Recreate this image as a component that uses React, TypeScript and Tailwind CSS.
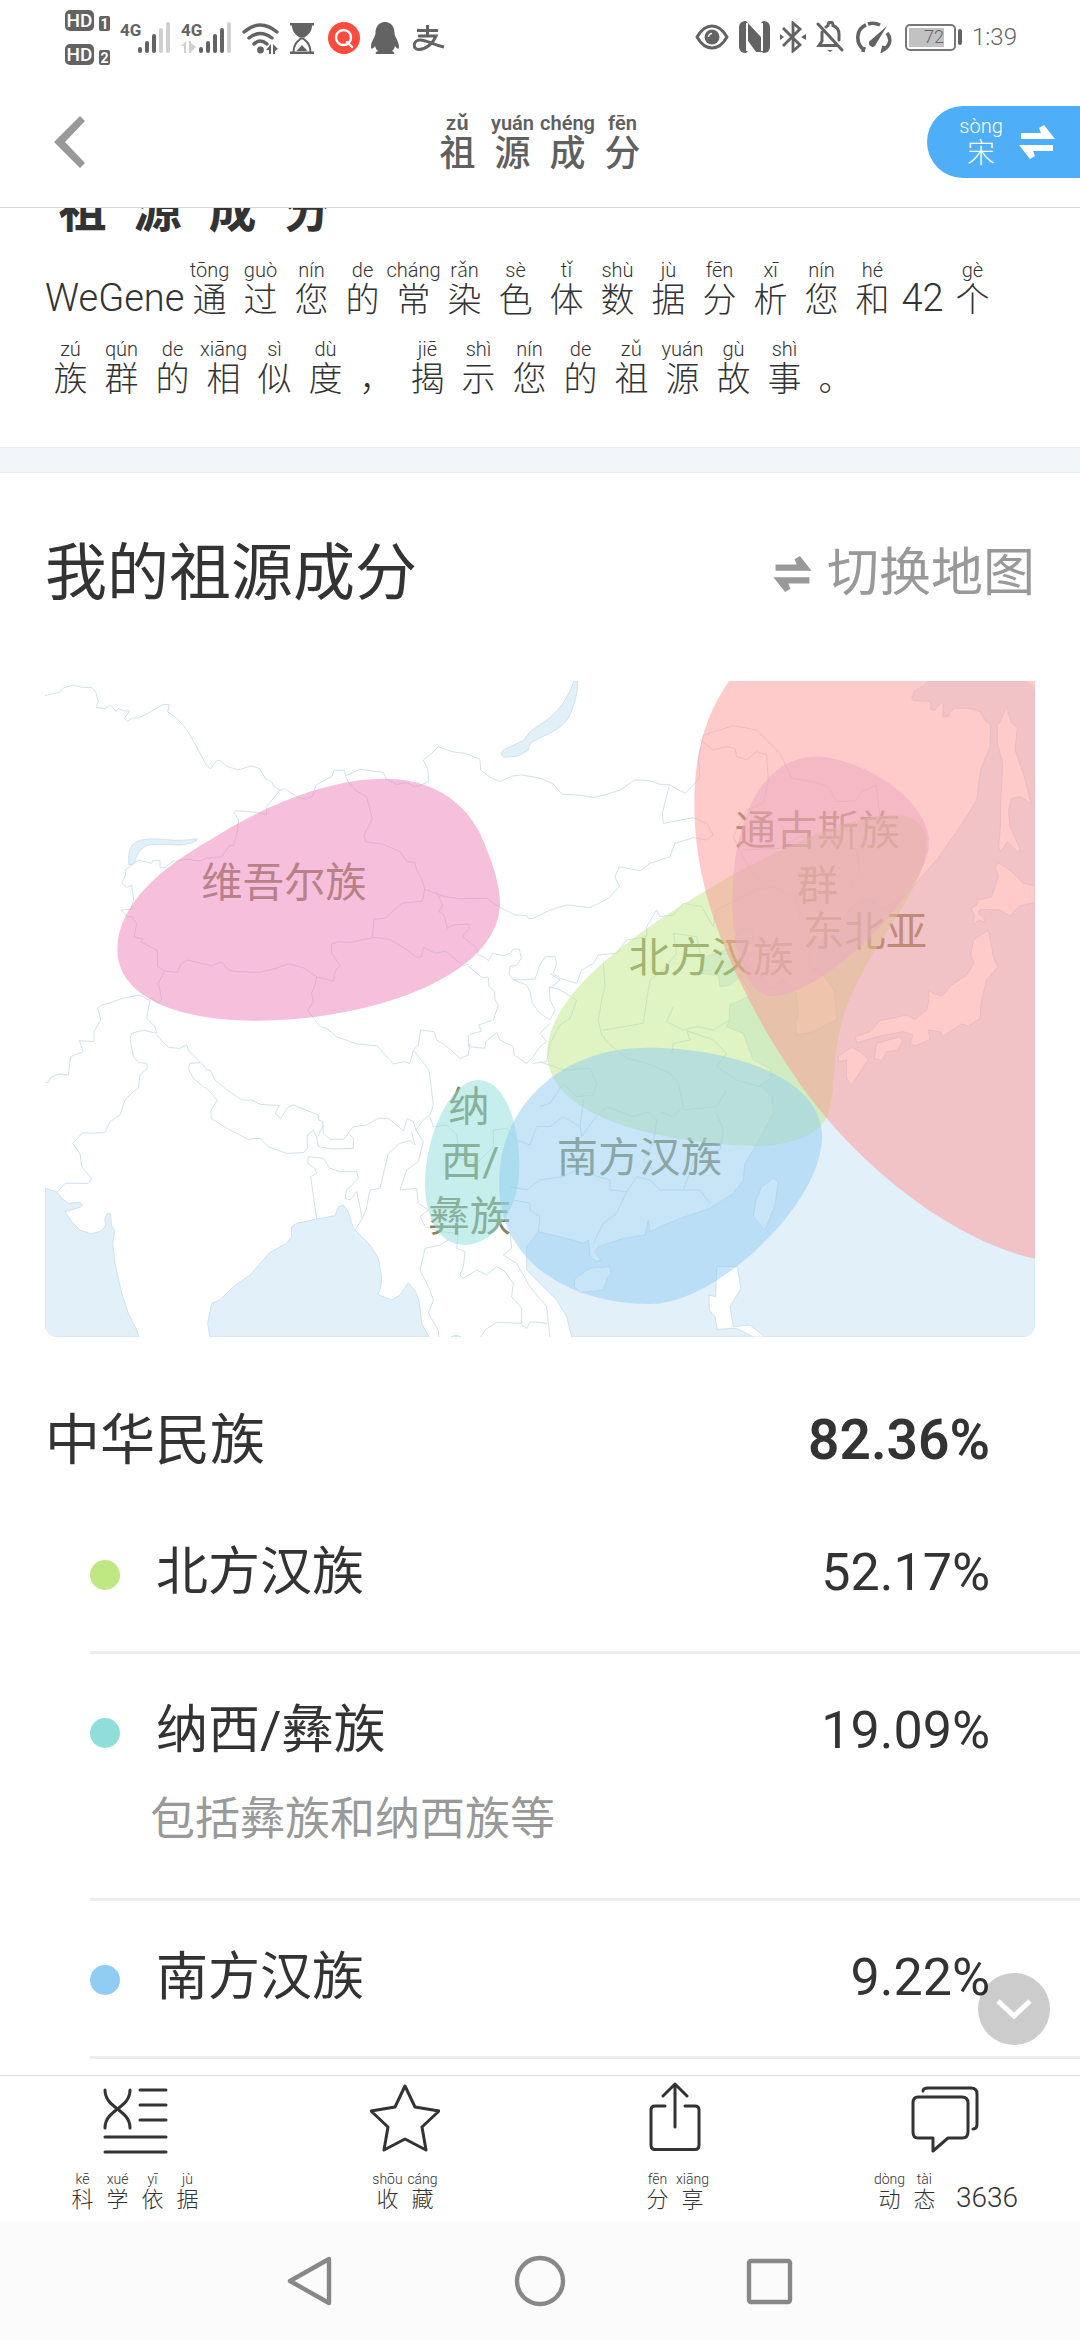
import React from "react";

type Cell = [string, string];

const hand = "font-['Roboto','Noto_Sans_CJK_SC',sans-serif]";

function Hanzi({ cells, cell, pinyin, glyph }: { cells: Cell[]; cell: string; pinyin: string; glyph: string }) {
  return (
    <>
      {cells.map(([p, h], i) => (
        <span key={i} className={`flex flex-col items-center whitespace-nowrap ${cell}`}>
          <span className={pinyin}>{p || "\u00a0"}</span>
          <span className={glyph}>{h}</span>
        </span>
      ))}
    </>
  );
}

function Swap({ className }: { className: string }) {
  return (
    <svg viewBox="0 0 36 34" className={className} fill="currentColor" aria-hidden="true">
      <path d="M2 8H22L20 3L25 0L36 14H2Z" />
      <path d="M34 26H14L16 31L11 34L0 20H34Z" />
    </svg>
  );
}

function HdBadge({ n }: { n: string }) {
  return (
    <span className="flex items-end gap-[5px]">
      <span className="flex h-[21px] w-[29px] items-center justify-center rounded-[5px] bg-[#636363]">
        <span className="text-[19px] leading-none font-medium text-white">HD</span>
      </span>
      <span className="flex h-[15px] w-[11px] items-center justify-center rounded-[2px] bg-[#636363] text-[14px] leading-none font-bold text-white">
        {n}
      </span>
    </span>
  );
}

function Signal({ level, data }: { level: number; data?: boolean }) {
  const bars: [number, number][] = [[18, 25], [25, 19], [32, 12], [39, 6], [46, 0]];
  return (
    <span className="relative flex h-8 w-[50px]">
      <span className="text-[17px] leading-[16px] font-bold text-[#636363]">4G</span>
      <svg viewBox="0 0 50 31" className="absolute inset-0 h-[31px] w-[50px]" aria-hidden="true">
        {bars.map(([x, y], i) => (
          <rect key={x} x={x} y={y} width="4" height={31 - y} rx="2" fill={i < level ? "#636363" : "#d0d0d0"} />
        ))}
        {data && <path d="M0 24L5 19V31H3V24ZM8 19H10V30L15 25L10 21V31H8Z" fill="#d0d0d0" />}
      </svg>
    </span>
  );
}

function StatusBar() {
  return (
    <div className="flex h-[76px] items-start justify-between pr-[63px] pl-[65px] text-[#636363]">
      <div className="flex items-start">
        <div className="flex flex-col gap-[13px] pt-[10px]">
          <HdBadge n="1" />
          <HdBadge n="2" />
        </div>
        <div className="flex items-center gap-[11px] pt-[22px] pl-[10px]">
          <Signal level={3} />
          <Signal level={4} data />
          <svg viewBox="0 0 37 31" className="h-[31px] w-[37px]" fill="none" stroke="#636363" strokeWidth="3.4" strokeLinecap="round" aria-hidden="true">
            <path d="M2 9Q18 -5 35 9M7 15Q18 6 30 15M12 21Q18 15 25 21" />
            <circle cx="18.5" cy="27" r="3.4" fill="#636363" stroke="none" />
            <path d="M24 27L29 21V31H27V27ZM31 21L36 26L33 28V31H31Z" fill="#636363" stroke="none" />
          </svg>
          <svg viewBox="0 0 24 31" className="h-[31px] w-6" aria-hidden="true">
            <path d="M0 0H24V2.5H22C22 9 18 12 14.5 14.5H9.5C6 12 2 9 2 2.5H0ZM0 31V28.5H24V31Z" fill="#636363" />
            <path d="M3.5 29C3.5 21 8 18 11 15.5H13C16 18 20.5 21 20.5 29" fill="none" stroke="#636363" strokeWidth="2" />
            <path d="M6.5 28L12 22L17.5 28Z" fill="#636363" />
          </svg>
          <svg viewBox="0 0 32 32" className="ml-[3px] h-8 w-8" aria-hidden="true">
            <circle cx="16" cy="16" r="16" fill="#fb4c3f" />
            <circle cx="15.5" cy="15.5" r="7.5" fill="none" stroke="#fff" strokeWidth="2.4" />
            <path d="M19 20L24 25" stroke="#fff" strokeWidth="2.4" strokeLinecap="round" />
          </svg>
          <svg viewBox="0 0 28 32" className="h-8 w-7" fill="#636363" aria-hidden="true">
            <path d="M14 0C7.5 0 4.5 5 4.5 11C4.5 15 0 19 0 25C0 28 2 27 4 24C4.5 26 5.5 28 7 29C4 30 4 32 6 32H22C24 32 24 30 21 29C22.5 28 23.5 26 24 24C26 27 28 28 28 25C28 19 23.5 15 23.5 11C23.5 5 20.5 0 14 0Z" />
          </svg>
          <svg viewBox="0 0 32 26" className="ml-[3px] h-[26px] w-8" fill="none" stroke="#636363" strokeWidth="3" aria-hidden="true">
            <path d="M4 5.5H25M14.5 0V11M5 11H23C20 19 12 24.5 6 24.5C-1 24.5 0 15 7 15C14 15 20 20 31 22" />
          </svg>
        </div>
      </div>
      <div className="flex items-center gap-[10px] pt-[21px]">
        <svg viewBox="0 0 34 26" className="h-[26px] w-[34px]" fill="none" stroke="#636363" strokeWidth="3" aria-hidden="true">
          <path d="M2 13C6 6 11 2 17 2S28 6 32 13C28 20 23 24 17 24S6 20 2 13Z" />
          <circle cx="17" cy="13" r="7.5" fill="#636363" stroke="none" />
          <path d="M13.5 13A3.5 3.5 0 0 1 17 9.5" stroke="#fff" strokeWidth="1.5" />
        </svg>
        <svg viewBox="0 0 31 32" className="h-8 w-[31px]" aria-hidden="true">
          <rect width="31" height="32" rx="6" fill="#636363" />
          <path d="M7 0L22 16V2L24 0H7ZM9 12V30L7 32H24L9 12Z" fill="#fff" />
          <path d="M12 2L21 13V2ZM11 20V30H18Z" fill="#fff" />
          <path d="M7 1L24 31H17L7 17Z" fill="#636363" />
          <path d="M8 2V30M23 2V30" stroke="#fff" strokeWidth="2" />
        </svg>
        <svg viewBox="0 0 26 32" className="h-8 w-[26px]" fill="none" stroke="#636363" strokeWidth="2.8" aria-hidden="true">
          <path d="M3 7L20 24L13 30V2L20 8L3 25" />
          <path d="M0 13V19L4 16ZM26 13V19L21 16Z" fill="#636363" stroke="none" />
        </svg>
        <svg viewBox="0 0 28 32" className="h-8 w-7" fill="none" stroke="#636363" strokeWidth="3" strokeLinecap="round" aria-hidden="true">
          <path d="M2 3L26 29M6 11V20L3 24.5H20M10 6Q11 5 12 4.5C12 0 17 0 17 4.5Q23 7 23 13V19" />
          <path d="M11 29H17L14 31Z" fill="#636363" stroke="none" />
        </svg>
        <svg viewBox="0 0 36 32" className="ml-[2px] h-8 w-9" fill="none" stroke="#636363" strokeWidth="3.6" aria-hidden="true">
          <path d="M7 31L8 26M8 29C-1 22 0 8 10 4M12 3Q18 1 24 4M31 12C36 18 34 25 27 29L28 25" />
          <path d="M31 5L20 23A3.6 3.6 0 1 1 15 19Z" fill="#636363" stroke="none" />
        </svg>
        <span className="ml-[3px] flex items-center gap-[2px]">
          <span className="flex h-[27px] w-[51px] rounded-[5px] border-2 border-[#777] p-[2px]">
            <span className="flex w-[35px] items-center justify-end bg-[#c2c2c2] text-[18px] leading-none font-light">72</span>
          </span>
          <span className="h-4 w-1 rounded-sm bg-[#636363]" />
        </span>
        <span className="text-[24px] leading-8 font-light">1:39</span>
      </div>
    </div>
  );
}

const titleCells: Cell[] = [["zǔ", "祖"], ["yuán", "源"], ["chéng", "成"], ["fēn", "分"]];

function Header() {
  return (
    <header className="grid h-[132px] grid-cols-3 items-center border-b border-[#d5d5d5]">
      <button type="button" aria-label="返回" className="ml-[54px] w-8">
        <svg viewBox="0 0 32 52" className="h-[52px] w-8" fill="#999" aria-hidden="true">
          <path d="M26 0L31 5L11 26L31 47L26 52L0 26Z" />
        </svg>
      </button>
      <h1 className="flex justify-center text-[#606060]">
        <Hanzi cells={titleCells} cell="w-[55px]" pinyin="text-[20px] leading-[24px] font-semibold" glyph="text-[36px] leading-[38px] font-medium" />
      </h1>
      <button type="button" aria-label="切换用户" className="flex h-[72px] w-[153px] items-center justify-self-end rounded-l-full bg-[#4eaef8] pl-[33px] text-white">
        <span className="flex w-[42px] flex-col items-center">
          <span className="text-[20px] leading-[24px] font-light whitespace-nowrap">sòng</span>
          <span className="text-[28px] leading-[32px] font-light">宋</span>
        </span>
        <Swap className="ml-[17px] h-[34px] w-9" />
      </button>
    </header>
  );
}

const intro: Cell[] = [
  ["tōng", "通"], ["guò", "过"], ["nín", "您"], ["de", "的"], ["cháng", "常"], ["rǎn", "染"], ["sè", "色"],
  ["tǐ", "体"], ["shù", "数"], ["jù", "据"], ["fēn", "分"], ["xī", "析"], ["nín", "您"], ["hé", "和"],
];
const introTail: Cell[] = [
  ["gè", "个"], ["zú", "族"], ["qún", "群"], ["de", "的"], ["xiāng", "相"], ["sì", "似"], ["dù", "度"], ["", "，"],
  ["jiē", "揭"], ["shì", "示"], ["nín", "您"], ["de", "的"], ["zǔ", "祖"], ["yuán", "源"], ["gù", "故"], ["shì", "事"], ["", "。"],
];

function Intro() {
  const look = { cell: "w-[51px]", pinyin: "text-[20px] leading-[24px]", glyph: "text-[34px] leading-[36px]" };
  return (
    <section className="px-[45px] pb-[50px] text-[#333]">
      <div className="flex h-[27px] items-end overflow-hidden text-[48px] leading-none font-bold">
        {["祖", "源", "成", "分"].map((c) => (
          <span key={c} className="w-[75px] text-center">{c}</span>
        ))}
      </div>
      <p className="flex flex-wrap items-end gap-y-[19px] pt-[23px] font-light">
        <span className="w-[139px] text-[38px] leading-[40px]">WeGene</span>
        <Hanzi cells={intro} {...look} />
        <span className="w-[49px] text-center text-[38px] leading-[40px]">42</span>
        <Hanzi cells={introTail} {...look} />
      </p>
    </section>
  );
}

const seas = [
  "M45 1555L80 1565L95 1585L115 1600L150 1597L157 1605L150 1612L105 1625L125 1655L150 1680L185 1692L215 1682L228 1665L224 1648L232 1630L242 1632L244 1665L254 1682L248 1720L255 1780L275 1870L295 1930L320 1980L327 2001H45Z",
  "M540 2001L533 1960L545 1900L570 1890L610 1850L660 1815L720 1747L770 1720L785 1700L785 1670L800 1660L860 1647L915 1637L925 1610L940 1605L955 1625L970 1675L1020 1725L1045 1765L1055 1820L1052 1855L1043 1873L1085 1890L1110 1875L1135 1838L1155 1862L1167 1890L1175 1960L1197 2001Z",
  "M2695 33L2680 48L2655 62L2645 85L2652 92L2700 94L2703 118L2712 123L2735 95L2740 100L2738 142L2755 138L2770 115L2820 115L2850 125L2865 150L2882 165L2880 230L2852 300L2840 390L2810 440L2770 500L2720 570L2640 660L2600 695L2560 715L2515 685L2460 715L2432 755L2435 780L2360 820L2335 850L2335 890L2375 910L2412 960L2422 1048L2350 1085L2300 1095L2295 1060L2305 1030L2298 970L2260 930L2220 955L2180 900L2150 890L2130 860L2170 810L2165 775L2125 775L2110 830L2060 850L2010 865L2015 910L2065 915L2070 950L2100 945L2130 920L2165 975L2100 1005L2098 1050L2090 1070L2140 1090L2170 1170L2220 1195L2223 1225L2190 1245L2225 1280L2230 1330L2175 1430L2145 1480L2140 1530L2110 1570L2040 1615L1960 1642L1890 1670L1860 1685L1855 1650L1845 1695L1780 1705L1705 1730L1693 1745L1713 1770L1700 1775L1680 1760L1675 1710L1660 1720L1590 1700L1525 1685L1490 1730L1490 1800L1580 1890L1610 1940L1625 2001H3015V33Z",
  "M1412 248L1425 237L1480 212L1500 185L1560 143Q1610 100 1632 33H1643Q1645 80 1615 145Q1590 180 1530 203L1500 220L1495 240L1465 258L1420 262Z",
  "M297 585C292 530 305 507 370 507C420 507 440 517 500 506C510 510 480 523 450 525C410 524 395 521 360 524C335 530 320 550 313 580Z",
  "M1263 2001Q1278 1990 1293 2001Z",
];

const islands = [
  "M2930 110L2910 155L2902 165V220L2918 280L2912 400L2912 460L2906 530L2912 545L2932 515L2965 548L2970 535L2940 470L2936 420L2945 385L2970 380L3004 402L2980 310L2955 240L2962 175L2942 155Z",
  "M2905 578L2895 590L2905 620L2885 680L2845 690L2840 705L2823 715L2833 735L2830 765L2845 750L2866 757L2860 740L2845 732L2850 718L2910 720L2940 738L2965 710L3015 697V648L2980 640L2945 605Z",
  "M2875 780L2830 810L2822 855L2832 880L2810 915L2765 945L2735 978L2710 970L2695 960L2698 980L2690 1020L2655 1048L2630 1035L2550 1052L2520 1085L2475 1100L2480 1118L2550 1098L2620 1085L2650 1095L2640 1120L2655 1128L2700 1108L2695 1080L2730 1085L2740 1098L2795 1062L2815 1068L2850 1045L2853 1000L2870 930L2903 890L2890 860Z",
  "M2610 1100L2540 1120L2532 1165L2555 1172L2570 1145L2600 1142L2618 1115Z",
  "M2465 1132L2425 1158L2425 1175L2450 1170L2450 1225L2465 1245L2515 1168L2490 1145Z",
  "M2230 1525L2245 1535L2235 1605L2205 1680L2170 1640L2178 1590L2195 1550Z",
  "M1740 1790L1680 1795L1635 1825L1633 1850L1650 1868L1720 1860L1730 1830L1742 1810Z",
  "M2060 1790L2122 1790L2125 1810L2133 1855L2100 1910L2110 1970L2160 1965L2205 2001H2170L2120 1975L2062 1978L2055 1940L2038 1920L2037 1875L2057 1880Z",
];

const borders = [
  "M45 77L90 66L100 54L130 45L160 53L185 52L197 66L205 95L199 112L225 116L242 105L258 124L265 116L283 123L299 123L283 145L292 154L310 143L325 144L365 124L400 103L418 104L413 125L440 145L470 178L505 240L530 287L542 296L560 272L572 272L590 289L625 300L665 287L690 297L705 325L725 335L732 350L752 362L762 355L805 383L830 388L848 378L858 345L905 320L912 301H943L948 320L955 337L975 360L1010 380L1027 447L1002 495L1007 515L1060 523L1110 545L1130 573L1155 578L1160 600L1175 625L1184 658L1177 693L1115 700L1065 745L1032 748L1027 802",
  "M948 317L990 298L1060 307L1068 327L1100 343L1130 338L1157 352L1195 335L1194 300L1180 270L1205 250L1225 230L1265 245L1305 250L1350 268L1352 300L1385 325L1412 334L1445 318L1475 315L1530 324L1570 342L1595 372L1650 376L1690 382L1725 375L1770 360L1815 330L1860 332L1890 343L1920 345L1965 370L1990 345L2010 320L2005 270L2020 195L2070 180L2110 167L2180 180L2250 250L2285 325L2350 335L2395 350L2420 395L2475 393L2495 365L2538 345L2550 440",
  "M752 358L710 410V435L680 427L617 422L612 427L626 450L620 495L610 528L600 525L575 560L530 565L510 573L470 568L445 573L430 573L405 592H390V572H368L365 580L325 570L285 600L287 615L275 640L290 652L305 645L311 690L302 718L273 720L292 740L305 740L320 760L313 800L340 808L332 815L382 842L383 890L403 903L442 907L453 882L472 870L545 887L575 876L595 900L620 905L690 907L745 893L775 881L825 895L860 921L910 933L917 900L930 885L905 850V822L925 815L965 817L1030 802L1080 808L1120 832L1160 862L1175 860L1180 832L1217 850L1247 843L1300 888L1315 883",
  "M1184 658L1245 680L1290 686L1370 685L1410 712L1455 735L1490 737L1495 746L1510 745L1560 720L1610 705L1680 713L1735 685L1768 650L1755 620L1768 590L1830 602L1860 580L1920 560L1935 520L1990 503L2030 510L2050 495L2030 460L1990 443L1910 458L1900 460L1897 430L1917 350",
  "M1220 667L1238 705L1227 725L1242 735L1252 775L1270 765L1315 762L1318 775L1298 800L1340 835L1345 855L1365 862L1375 872L1388 850L1420 857L1440 850L1450 837H1468L1474 865L1460 885L1440 890L1437 912L1450 930L1515 927L1530 885L1545 860L1575 860L1580 880L1570 910L1590 925L1640 940L1655 900L1690 880L1705 855L1760 850L1790 810L1850 800L1850 770L1880 720L1890 740L1930 735L1960 700L2015 710L2050 770L2060 720L2140 680L2180 660L2230 650L2300 690L2310 740L2260 790",
  "M1315 888L1355 922H1375L1377 950L1393 965L1395 990L1405 1005L1390 1050L1345 1065L1355 1083L1315 1095V1130L1365 1135L1367 1115L1400 1087L1410 1110L1450 1130L1452 1155L1490 1180L1510 1160L1530 1130L1550 1115L1530 1090L1560 1060",
  "M1450 930L1490 945L1500 965L1507 1000L1530 1030L1560 1050L1575 1020L1560 990L1558 950L1590 960L1640 990L1620 1045L1590 1065L1560 1120L1550 1175L1510 1180",
  "M200 1018L215 1005L245 997L280 984L330 975L355 990L365 983L385 1000L395 988L385 940L403 905M205 1018L212 1050L192 1085V1115L148 1112L160 1145L122 1160L115 1215L88 1212L62 1222L55 1237H45",
  "M360 990L350 1045L375 1070L380 1090L340 1080L305 1090L300 1105L310 1160L325 1178L350 1180L352 1195L330 1215L325 1255L310 1265L285 1290L270 1335L240 1355L225 1387L182 1390L158 1388L128 1420L150 1450L155 1490L185 1525L175 1540H105L83 1565",
  "M380 1095L415 1132L450 1135L470 1125L475 1140L520 1185L530 1200H540L555 1230L585 1255L635 1290L665 1290L690 1303L748 1307L735 1330L752 1345L775 1310L790 1305L865 1335V1350L878 1355L880 1390L900 1408H940L970 1370L1010 1365L1045 1345H1075L1120 1382L1132 1345L1150 1355L1158 1380L1180 1350L1200 1335L1210 1305L1197 1200L1150 1140",
  "M510 1178L480 1180L475 1195L490 1225L520 1250L535 1260L562 1290L543 1320V1345L600 1380L655 1408L690 1405L715 1430L770 1450L820 1448L832 1435V1395L850 1380L860 1400L865 1430L905 1437L970 1435V1405L960 1395M863 1400L880 1365",
  "M860 1647L842 1520L860 1510L855 1495L833 1480L835 1460L880 1465L900 1495L930 1505H980L985 1525L950 1560L945 1585L960 1590L980 1565L997 1645L975 1680M997 1645L1008 1620L1020 1560L1050 1555L1075 1450L1110 1420L1140 1412L1155 1425L1145 1385",
  "M1155 1375L1180 1415L1165 1475L1130 1500L1110 1560L1160 1555L1165 1600L1195 1620L1170 1640L1185 1670L1230 1685L1285 1690L1280 1735L1305 1745L1300 1790L1290 1815L1300 1825L1340 1800L1370 1815L1400 1790L1420 1800L1450 1840L1445 1880L1475 1915L1475 1960L1400 1957L1365 1980L1352 2001",
  "M1255 1710L1230 1725L1185 1735L1170 1800L1200 1860L1210 1890L1195 1930L1225 1980L1226 2001",
  "M1475 1965L1490 1975L1500 1955L1552 1960M1440 1685L1445 1735L1420 1755L1460 1780L1500 1850L1550 1910L1555 1960L1560 2001",
  "M1200 1340L1210 1370L1250 1365L1280 1395L1290 1465L1340 1480L1390 1430V1380L1430 1375L1460 1410L1500 1425L1520 1370L1560 1370L1600 1340L1650 1370L1655 1400L1690 1350L1730 1310L1810 1340L1855 1325L1880 1350L1870 1420L1840 1470L1870 1500",
  "M860 921L855 945L845 970L850 995L833 1022L870 1070L890 1075L920 1100L980 1122L1040 1127L1075 1165L1090 1182L1120 1175L1140 1180L1150 1140L1165 1125L1172 1080L1212 1085L1220 1110L1245 1125L1290 1165L1315 1155L1320 1120",
  "M1715 990L1705 1050L1715 1095L1735 1120L1790 1165L1850 1180L1920 1210L1945 1240L1960 1310L1930 1340L1890 1325M1850 990L1840 1060L1720 1080M1930 1010L1910 1055L1960 1080L2000 1070L2050 1080L2098 1050M1970 1080L1980 1110L1930 1120L1925 1150M1970 1082L2050 1110L2090 1150L2060 1190L2120 1230L2190 1250",
  "M1530 1175L1600 1200L1680 1195L1700 1240L1690 1275L1640 1280L1600 1240L1560 1300L1530 1310M1660 1290L1650 1370M1960 1320L2060 1310L2090 1260M2060 1330L2080 1380L2070 1440L2000 1450L1960 1560L2010 1560L2040 1600",
  "M1530 1530L1600 1520L1640 1500L1740 1530L1740 1560L1790 1565L1820 1520L1860 1530L1890 1560L1960 1560M1790 1565L1760 1630L1720 1660L1690 1720M1440 1550L1490 1560L1530 1530M1450 1590L1500 1600L1500 1620L1530 1640L1525 1685",
  "M2010 210L2050 240L2090 230L2115 235L2120 260L2150 270L2180 245L2210 255L2215 330L2200 400L2150 420L2110 500L2140 560L2160 600L2220 650M2140 540L2250 535L2310 500L2420 510L2480 540L2490 610L2460 650",
  "M1720 880L1725 950L1715 990M1850 990L1860 930L1900 900L1940 850L1930 790L2000 800L2010 850M1560 910L1590 930L1555 960",
];

const regions = [
  { d: "M2590 435C2660 435 2690 470 2690 520C2690 590 2650 660 2600 740C2540 830 2450 970 2430 1080C2405 1190 2420 1240 2395 1330C2370 1400 2270 1428 2180 1428C1980 1425 1552 1370 1552 1150C1552 1000 1730 840 2030 660C2200 560 2440 435 2590 435Z", fill: "#bfe787" },
  { d: "M262 840C262 700 400 590 540 510C680 420 880 326 1065 326C1200 326 1300 390 1350 490C1385 570 1410 640 1410 700C1405 930 1000 1052 680 1052C400 1052 262 960 262 840Z", fill: "#ed7fb7" },
  { d: "M1345 1230C1420 1230 1468 1350 1468 1490C1468 1620 1390 1725 1303 1725C1225 1725 1185 1640 1185 1540C1185 1400 1260 1230 1345 1230Z", fill: "#8ddddb" },
  { d: "M1850 1133C2100 1133 2376 1220 2376 1400C2376 1600 2060 1902 1860 1902C1640 1902 1407 1790 1407 1540C1407 1300 1600 1133 1850 1133Z", fill: "#91cbf1" },
  { d: "M2360 260C2480 260 2697 380 2697 520C2697 660 2380 978 2230 978C2150 978 2107 850 2107 690C2107 480 2180 260 2360 260Z", fill: "#d3bbeb" },
  { d: "M2097 33C2030 130 1993 240 1993 400C1993 620 2060 800 2157 990C2230 1130 2310 1250 2390 1345C2560 1545 2800 1720 3015 1766V33Z", fill: "#ff9595" },
];

const labels: [string, number, number][] = [
  ["维吾尔族", 762, 680],
  ["通古斯族", 2362, 525],
  ["群", 2362, 690],
  ["东北亚", 2505, 828],
  ["北方汉族", 2044, 907],
  ["纳", 1317, 1353],
  ["西/", 1320, 1518],
  ["彝族", 1319, 1683],
  ["南方汉族", 1828, 1507],
];

function AncestryMap() {
  return (
    <svg viewBox="45 33 2970 1968" role="img" aria-label="祖源分布地图" className="block w-full">
      <clipPath id="map-frame">
        <rect x="45" y="33" width="2970" height="1968" rx="36" />
      </clipPath>
      <g stroke="#cfe2ef" strokeWidth="3" strokeLinejoin="round" clipPath="url(#map-frame)">
        {seas.map((d) => <path key={d} d={d} fill="#e2f0f9" />)}
        {islands.map((d) => <path key={d} d={d} fill="#fff" />)}
        {borders.map((d) => <path key={d} d={d} fill="none" />)}
      </g>
      <g fill="#838359" fontSize="124" textAnchor="middle">
        {labels.map(([t, x, y]) => <text key={t} x={x} y={y}>{t}</text>)}
      </g>
      {regions.map((r) => <path key={r.fill} d={r.d} fill={r.fill} fillOpacity="0.5" />)}
    </svg>
  );
}

const groups = [
  { name: "北方汉族", value: "52.17%", dot: "bg-[#bfe882]", note: "" },
  { name: "纳西/彝族", value: "19.09%", dot: "bg-[#90dedc]", note: "包括彝族和纳西族等" },
  { name: "南方汉族", value: "9.22%", dot: "bg-[#91cdf2]", note: "" },
];

function Composition() {
  return (
    <section className="text-[#333]">
      <div className="flex items-center justify-between px-[45px] pt-[61px] pb-[67px]">
        <h2 className="text-[62px] leading-[80px]">我的祖源成分</h2>
        <button type="button" className="flex items-center gap-[15px] text-[52px] leading-[76px] text-[#999]">
          <Swap className="h-9 w-[39px]" />
          切换地图
        </button>
      </div>
      <div className="px-[45px]">
        <AncestryMap />
      </div>
      <div className="flex items-center justify-between pt-[63px] pr-[90px] pb-[16px] pl-[45px]">
        <h3 className="text-[55px] leading-[80px]">中华民族</h3>
        <span className="text-[55px] leading-[80px] font-semibold">82.36%</span>
      </div>
      <ul className="pl-[90px]">
        {groups.map((g) => (
          <li key={g.name} className="border-b-[3px] border-[#eaeef1] pt-[39px] pr-[90px] pb-[40px]">
            <div className="flex items-center text-[52px] leading-[76px]">
              <span className={`mt-[4px] mr-9 size-[30px] rounded-full ${g.dot}`} />
              <span className="flex-1">{g.name}</span>
              <span>{g.value}</span>
            </div>
            {g.note && <p className="pt-[18px] pb-[5px] pl-[60px] text-[45px] leading-[66px] text-[#999]">{g.note}</p>}
          </li>
        ))}
      </ul>
    </section>
  );
}

const tabs: { cells: Cell[]; count?: string; icon: React.ReactNode }[] = [
  {
    cells: [["kē", "科"], ["xué", "学"], ["yī", "依"], ["jù", "据"]],
    icon: <path d="M5 8C5 27 30 27 30 46M30 8C30 27 5 27 5 46M40 8H66M40 23H66M40 38H66M5 55H66M5 70H66" />,
  },
  {
    cells: [["shōu", "收"], ["cáng", "藏"]],
    icon: <path d="M35 4L45 25L69 29L52 45L56 68L35 57L14 68L18 45L1 29L25 25Z" />,
  },
  {
    cells: [["fēn", "分"], ["xiāng", "享"]],
    icon: <path d="M25 24H15Q11 24 11 28V63Q11 67.5 15 67.5H55Q59 67.5 59 63V28Q59 24 55 24H45M35 45V2M23 14L35 2L47 14" />,
  },
  {
    cells: [["dòng", "动"], ["tài", "态"]],
    count: "3636",
    icon: <path d="M8 15H52Q58 15 58 21V50Q58 56 52 56H38L23 69V56H8Q3 56 3 50V21Q3 15 8 15ZM13 9Q13 6 18 6H61Q67 6 67 12V42Q67 47 63 47" />,
  },
];

function Toolbar() {
  return (
    <nav className="grid grid-cols-4 border-t border-[#dcdcdc] pt-[6px] pb-[10px] text-[#333]">
      {tabs.map((t) => (
        <button key={t.cells[0][1]} type="button" className="flex flex-col items-center gap-4">
          <svg viewBox="0 0 70 72" className="h-[72px] w-[70px]" fill="none" stroke="#333" strokeWidth="3" strokeLinecap="round" strokeLinejoin="round" aria-hidden="true">
            {t.icon}
          </svg>
          <span className="flex items-end font-light">
            <Hanzi cells={t.cells} cell="w-[35px]" pinyin="text-[14px] leading-[18px]" glyph="text-[22px] leading-[24px]" />
            {t.count && <span className="pl-[14px] text-[28px] leading-[28px]">{t.count}</span>}
          </span>
        </button>
      ))}
    </nav>
  );
}

function SystemNav() {
  const svg = "h-[52px] w-[52px]";
  return (
    <nav className="flex h-[118px] items-center justify-center gap-[178px] bg-[#fbfbfb]">
      <button type="button" aria-label="后退">
        <svg viewBox="0 0 52 52" className={svg} fill="none" stroke="#888" strokeWidth="4.4" strokeLinejoin="round" aria-hidden="true">
          <path d="M45 4V48L6 26Z" />
        </svg>
      </button>
      <button type="button" aria-label="主页">
        <svg viewBox="0 0 52 52" className={svg} fill="none" stroke="#888" strokeWidth="4.4" aria-hidden="true">
          <circle cx="26" cy="26" r="23" />
        </svg>
      </button>
      <button type="button" aria-label="最近任务">
        <svg viewBox="0 0 52 52" className={svg} fill="none" stroke="#888" strokeWidth="4.4" aria-hidden="true">
          <rect x="5" y="6" width="41" height="41" rx="2" />
        </svg>
      </button>
    </nav>
  );
}

export default function App() {
  return (
    <div className={`flex min-h-screen flex-col bg-white ${hand}`} lang="zh-CN">
      <StatusBar />
      <Header />
      <main className="relative flex-1">
        <Intro />
        <div className="h-[26px] border-y border-[#e8ecee] bg-[#f2f6fa]" />
        <Composition />
        <button type="button" aria-label="向下滚动" className="absolute right-[30px] bottom-[30px] flex size-[72px] items-center justify-center rounded-full bg-black/20">
          <svg viewBox="0 0 36 22" className="h-[22px] w-9" fill="none" stroke="#fff" strokeWidth="5" aria-hidden="true">
            <path d="M2 3L18 18L34 3" />
          </svg>
        </button>
      </main>
      <Toolbar />
      <SystemNav />
    </div>
  );
}
